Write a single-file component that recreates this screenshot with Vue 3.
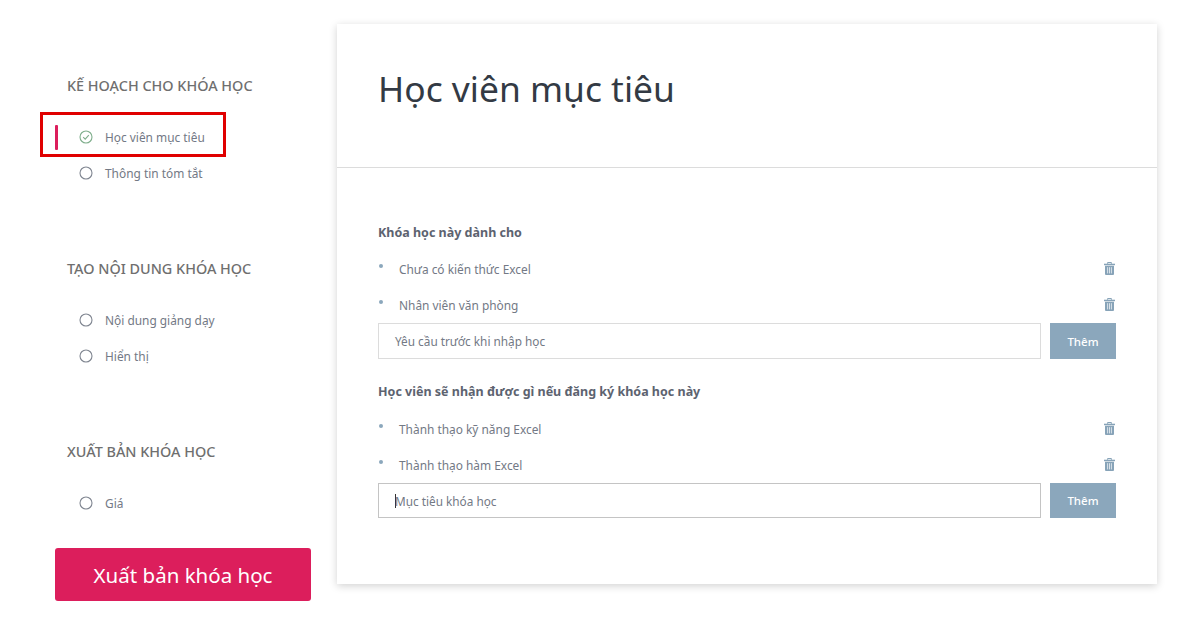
<script setup>
const sections = [
  { title: 'KẾ HOẠCH CHO KHÓA HỌC', items: [
    { label: 'Học viên mục tiêu', active: true },
    { label: 'Thông tin tóm tắt' }
  ] },
  { title: 'TẠO NỘI DUNG KHÓA HỌC', items: [
    { label: 'Nội dung giảng dạy' },
    { label: 'Hiển thị' }
  ] },
  { title: 'XUẤT BẢN KHÓA HỌC', items: [{ label: 'Giá' }] }
]

const groups = [
  { title: 'Khóa học này dành cho', rows: ['Chưa có kiến thức Excel', 'Nhân viên văn phòng'], placeholder: 'Yêu cầu trước khi nhập học' },
  { title: 'Học viên sẽ nhận được gì nếu đăng ký khóa học này', rows: ['Thành thạo kỹ năng Excel', 'Thành thạo hàm Excel'], placeholder: 'Mục tiêu khóa học', focused: true }
]
</script>

<template>
  <div class="page">
    <aside class="sidebar">
      <section v-for="s in sections" :key="s.title" class="nav-section">
        <h3 class="nav-title">{{ s.title }}</h3>
        <ul class="nav-list">
          <li v-for="item in s.items" :key="item.label" class="nav-item" :class="{ active: item.active }">
            <span v-if="item.active" class="marker"></span>
            <svg class="nav-icon" viewBox="0 0 14 14" width="14" height="14">
              <circle cx="7" cy="7" r="6" fill="none" :stroke="item.active ? '#7fae8c' : '#7f8590'" stroke-width="1.1" />
              <path v-if="item.active" d="M4.2 7.2l2 2 3.6-4" fill="none" stroke="#7fae8c" stroke-width="1.1" />
            </svg>
            <span>{{ item.label }}</span>
          </li>
        </ul>
      </section>
      <button class="publish">Xuất bản khóa học</button>
    </aside>

    <main class="card">
      <header class="card-head">
        <h1>Học viên mục tiêu</h1>
      </header>
      <div class="card-body">
        <div v-for="g in groups" :key="g.title" class="group">
          <h4>{{ g.title }}</h4>
          <div v-for="row in g.rows" :key="row" class="row">
            <span class="dot"></span>
            <span class="row-text">{{ row }}</span>
            <svg class="trash" viewBox="0 0 11 13" width="11" height="13">
              <path d="M3.6 1.8V.5h3.8v1.3" fill="none" stroke="#87a3b8" stroke-width="1" />
              <path d="M0 1.7h11v1.5H0z" fill="#87a3b8" />
              <path d="M1 3.8h9v8.2a1 1 0 0 1-1 1H2a1 1 0 0 1-1-1z" fill="#87a3b8" />
              <path d="M3.6 5.2v6.2M5.5 5.2v6.2M7.4 5.2v6.2" stroke="#fff" stroke-width=".7" />
            </svg>
          </div>
          <div class="add-row">
            <div class="input" :class="{ focused: g.focused }">
              <span v-if="g.focused" class="caret"></span>{{ g.placeholder }}
            </div>
            <button class="add">Thêm</button>
          </div>
        </div>
      </div>
    </main>

    <div class="highlight"></div>
  </div>
</template>

<style>
html, body { margin: 0; background: #fff; }
</style>

<style scoped>
.page {
  position: relative;
  width: 1200px;
  height: 630px;
  overflow: hidden;
  display: flex;
  align-items: flex-start;
  gap: 26px;
  padding: 24px 0 0 55px;
  box-sizing: border-box;
  font-family: "Noto Sans", "Open Sans", sans-serif;
  background: #fff;
}
.sidebar {
  width: 256px;
  flex: none;
  padding-top: 52px;
  display: flex;
  flex-direction: column;
}
.nav-section { height: 183px; }
.nav-section:last-of-type { height: 106px; }
.nav-title {
  margin: 0 0 23px 12px;
  font-size: 14.4px;
  line-height: 20px;
  font-weight: 500;
  color: #6f6f6f;
}
.nav-list { list-style: none; margin: 0; padding: 0; }
.nav-item {
  position: relative;
  display: flex;
  align-items: center;
  gap: 12px;
  height: 36px;
  padding-left: 24px;
  font-size: 11.9px;
  color: #737985;
}
.marker {
  position: absolute;
  left: 0;
  top: 6px;
  width: 3px;
  height: 25px;
  border-radius: 1px;
  background: #dc1e5c;
}
.nav-icon { flex: none; }
.publish {
  height: 53px;
  border: none;
  border-radius: 3px;
  background: #dc1e5c;
  color: #fff;
  font-family: inherit;
  font-size: 20.5px;
}
.card {
  width: 820px;
  height: 560px;
  flex: none;
  background: #fff;
  box-shadow: 0 2px 8px rgba(0, 0, 0, 0.18);
}
.card-head {
  height: 144px;
  box-sizing: border-box;
  padding: 40px 41px 0;
  border-bottom: 1px solid #dcdcdc;
}
.card-head h1 {
  margin: 0;
  font-size: 35.4px;
  line-height: 48px;
  font-weight: 400;
  color: #333a44;
}
.card-body {
  padding: 55px 41px 0;
  display: flex;
  flex-direction: column;
  gap: 23px;
}
.group h4 {
  margin: 0 0 8px;
  font-size: 12.5px;
  line-height: 20px;
  font-weight: 700;
  color: #5d6370;
}
.group + .group h4 { margin-bottom: 9px; }
.row {
  display: flex;
  align-items: center;
  height: 36px;
  font-size: 11.9px;
  color: #737985;
}
.dot {
  width: 4px;
  height: 4px;
  border-radius: 50%;
  background: #8ba7bc;
  margin: -7px 16px 0 1px;
}
.row-text { flex: 1; }
.trash { margin: -2px 1px 0 0; }
.add-row {
  display: flex;
  gap: 9px;
  height: 36px;
}
.group + .group .add-row { height: 35px; }
.input {
  flex: 1;
  box-sizing: border-box;
  display: flex;
  align-items: center;
  padding-left: 16px;
  border: 1px solid #dcdcdc;
  font-size: 11.8px;
  color: #737985;
}
.input.focused { border-color: #c4c4c4; }
.caret {
  width: 1px;
  height: 14px;
  margin-right: -1px;
  background: #333;
}
.add {
  width: 66px;
  border: none;
  background: #8ba7bc;
  color: #fff;
  font-family: inherit;
  font-size: 11.5px;
  font-weight: 500;
}
.highlight {
  position: absolute;
  left: 40px;
  top: 112px;
  width: 186px;
  height: 45px;
  box-sizing: border-box;
  border: 3px solid #e00000;
  pointer-events: none;
}
</style>
